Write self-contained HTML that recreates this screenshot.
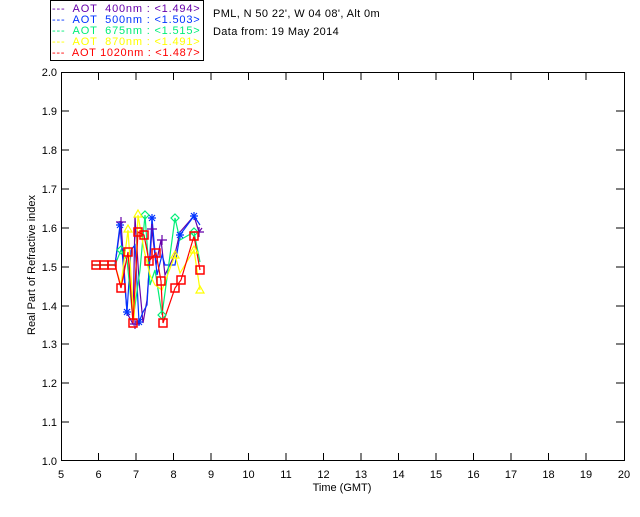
<!DOCTYPE html>
<html><head><meta charset="utf-8"><style>
body{margin:0;background:#fff;width:640px;height:512px;overflow:hidden}
svg text{font-family:"Liberation Sans",sans-serif;font-size:11px;white-space:pre}
</style></head><body>
<svg width="640" height="512" xmlns="http://www.w3.org/2000/svg">
<rect x="50.5" y="0.5" width="153" height="60" fill="#fff" stroke="#000"/>
<g font-size="11" letter-spacing="0.3">
<text x="52" y="12" fill="#6600aa" textLength="148">---  AOT  400nm : &lt;1.494&gt;</text>
<text x="52" y="23" fill="#0033ff" textLength="148">---  AOT  500nm : &lt;1.503&gt;</text>
<text x="52" y="34" fill="#00ee77" textLength="148">---  AOT  675nm : &lt;1.515&gt;</text>
<text x="52" y="45" fill="#ffff00" textLength="148">---  AOT  870nm : &lt;1.491&gt;</text>
<text x="52" y="56" fill="#ff0000" textLength="148">---  AOT 1020nm : &lt;1.487&gt;</text>
<text x="213" y="17" fill="#000" textLength="167">PML, N 50 22', W 04 08', Alt 0m</text>
<text x="213" y="35" fill="#000" textLength="126">Data from: 19 May 2014</text>
</g>
<g stroke="#000" fill="none">
<rect x="61.5" y="72.5" width="563" height="388"/>
<path d="M98.5 461v-8M136 461v-8M173.5 461v-8M211 461v-8M248.5 461v-8M286 461v-8M323.5 461v-8M361 461v-8M398.5 461v-8M436 461v-8M473.5 461v-8M511 461v-8M548.5 461v-8M586 461v-8
M98.5 72v8M136 72v8M173.5 72v8M211 72v8M248.5 72v8M286 72v8M323.5 72v8M361 72v8M398.5 72v8M436 72v8M473.5 72v8M511 72v8M548.5 72v8M586 72v8
M61 111h8M61 150h8M61 189h8M61 228h8M61 267h8M61 306h8M61 344h8M61 383h8M61 422h8
M624 111h-8M624 150h-8M624 189h-8M624 228h-8M624 267h-8M624 306h-8M624 344h-8M624 383h-8M624 422h-8"/>
</g>
<g fill="#000" font-size="11" text-anchor="end">
<text x="57" y="76">2.0</text><text x="57" y="115">1.9</text><text x="57" y="154">1.8</text><text x="57" y="193">1.7</text><text x="57" y="232">1.6</text><text x="57" y="271">1.5</text><text x="57" y="310">1.4</text><text x="57" y="348">1.3</text><text x="57" y="387">1.2</text><text x="57" y="426">1.1</text><text x="57" y="465">1.0</text>
</g>
<g fill="#000" font-size="11" text-anchor="middle">
<text x="61" y="478">5</text><text x="98.5" y="478">6</text><text x="136" y="478">7</text><text x="173.5" y="478">8</text><text x="211" y="478">9</text><text x="248.5" y="478">10</text><text x="286" y="478">11</text><text x="323.5" y="478">12</text><text x="361" y="478">13</text><text x="398.5" y="478">14</text><text x="436" y="478">15</text><text x="473.5" y="478">16</text><text x="511" y="478">17</text><text x="548.5" y="478">18</text><text x="586" y="478">19</text><text x="624" y="478">20</text>
<text x="342" y="491">Time (GMT)</text>
<text transform="translate(35,265) rotate(-90)">Real Part of Refractive index</text>
</g>
<g fill="none" stroke-width="1.2">
<polyline stroke="#6600aa" points="92,265 115,265 121,222 127,313 133,324 135,217 139,280 143,323 147,300 152,229 156,265 161,240 165,275 175,254 180,232 194,216 199,232 202,228"/>
<polyline stroke="#0033ff" points="92,265 115,265 120,225 127,312 131,250 135,245 139,322 143,312 147,305 152,218 157,275 162,255 165,265 175,265 180,235 194,216 200,225"/>
<polyline stroke="#00ee77" points="92,265 115,265 121,250 127,260 133,320 140,270 145,215 150,285 155,270 162,315 175,218 180,240 194,232 200,262"/>
<polyline stroke="#ffff00" points="92,265 115,265 121,285 128,230 134,320 138,215 144,250 150,275 155,285 162,290 175,255 180,273 194,250 200,290"/>
<polyline stroke="#ff0000" points="92,265 115,265 121,288 128,252 133,323 138,232 144,235 149,261 156,253 161,281 163,323 175,288 181,280 194,236 200,270"/>
</g>
<g stroke="#0033ff" stroke-width="1.2">
<path d="M116 225h8M120 221v8M117 222l6 6M123 222l-6 6 M123 312h8M127 308v8M124 309l6 6M130 309l-6 6 M148 218h8M152 214v8M149 215l6 6M155 215l-6 6 M176 235h8M180 231v8M177 232l6 6M183 232l-6 6 M190 216h8M194 212v8M191 213l6 6M197 213l-6 6 M135 322h8M139 318v8M136 319l6 6M142 319l-6 6"/>
</g>
<g stroke="#6600aa" stroke-width="1.2">
<path d="M116 222h10M121 217v10 M130 324h10M135 319v10 M157 240h10M162 235v10 M194 232h10M199 227v10 M147 229h10M152 224v10"/>
</g>
<g fill="none" stroke="#00ee77" stroke-width="1.2">
<path d="M175 214l4 4-4 4-4-4z M121 246l4 4-4 4-4-4z M194 228l4 4-4 4-4-4z M162 311l4 4-4 4-4-4z M145 211l4 4-4 4-4-4z"/>
</g>
<g fill="none" stroke="#ffff00" stroke-width="1.2">
<path d="M138 210l4 7h-8z M128 225l4 7h-8z M200 286l4 7h-8z M175 251l4 7h-8z M194 246l4 7h-8z"/>
</g>
<g fill="none" stroke="#ff0000" stroke-width="1.5">
<rect x="92" y="261" width="8" height="8"/><rect x="100" y="261" width="8" height="8"/><rect x="108" y="261" width="8" height="8"/>
<rect x="117" y="284" width="8" height="8"/><rect x="124" y="248" width="8" height="8"/><rect x="129" y="319" width="8" height="8"/><rect x="134" y="228" width="8" height="8"/><rect x="140" y="231" width="8" height="8"/><rect x="145" y="257" width="8" height="8"/><rect x="152" y="249" width="8" height="8"/><rect x="157" y="277" width="8" height="8"/><rect x="159" y="319" width="8" height="8"/><rect x="171" y="284" width="8" height="8"/><rect x="177" y="276" width="8" height="8"/><rect x="190" y="232" width="8" height="8"/><rect x="196" y="266" width="8" height="8"/>
</g>
</svg>
</body></html>
